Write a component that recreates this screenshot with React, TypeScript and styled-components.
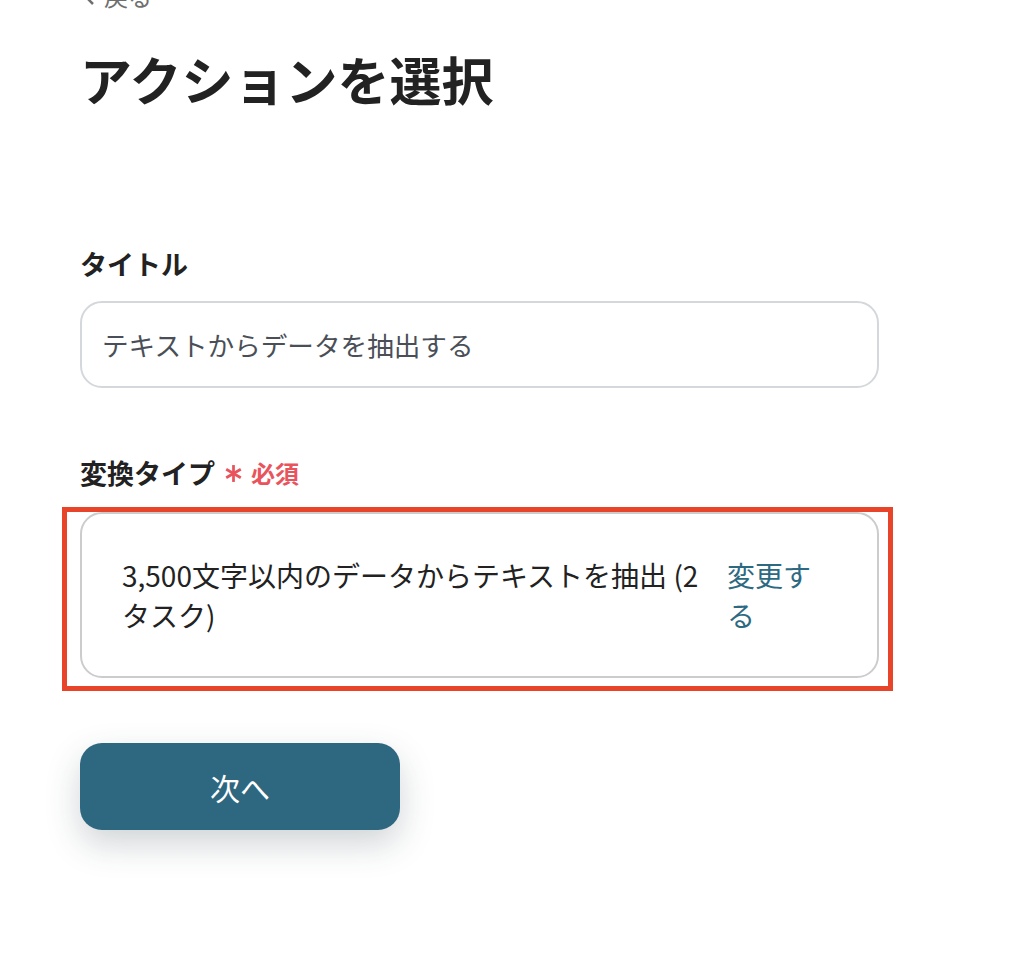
import React from "react";
import styled, { createGlobalStyle } from "styled-components";

const GlobalStyle = createGlobalStyle`
  html, body {
    margin: 0;
    padding: 0;
    background: #ffffff;
  }
  body {
    font-family: "Noto Sans CJK JP", "Noto Sans", sans-serif;
    color: #222222;
    overflow: hidden;
  }
  * { box-sizing: border-box; }
`;

const Page = styled.div`
  width: 1030px;
  height: 980px;
  padding-left: 80px;
  display: flex;
  flex-direction: column;
  align-items: flex-start;
`;

const BackLink = styled.a`
  display: flex;
  align-items: center;
  gap: 8px;
  margin-top: -19px;
  padding-left: 2px;
  height: 30px;
  line-height: 30px;
  font-size: 24px;
  color: #6f6f6f;
  text-decoration: none;
`;

const Heading = styled.h1`
  margin: 32px 0 0;
  font-size: 52px;
  line-height: 72px;
  font-weight: 700;
  color: #222222;
  letter-spacing: 0;
`;

const Field = styled.div<{ $top: number }>`
  display: flex;
  flex-direction: column;
  width: 800px;
  margin-top: ${(p) => p.$top}px;
`;

const Label = styled.div<{ $gap: number }>`
  display: flex;
  align-items: center;
  height: 40px;
  font-size: 27px;
  line-height: 40px;
  font-weight: 700;
  color: #222222;
  margin-bottom: ${(p) => p.$gap}px;
`;

const Required = styled.span`
  display: inline-flex;
  align-items: center;
  gap: 8px;
  margin-left: 9px;
  font-size: 24px;
  font-weight: 700;
  color: #e9545c;
`;

const TextInput = styled.div`
  width: 799px;
  height: 87px;
  border: 2px solid #d4d8dc;
  border-radius: 22px;
  padding: 0 20px;
  display: flex;
  align-items: center;
  font-size: 26.6px;
  color: #4a4f57;
`;

const CardWrap = styled.div`
  position: relative;
  width: 799px;
`;

const Card = styled.div`
  display: grid;
  grid-template-columns: 1fr 100px;
  column-gap: 2px;
  border: 2px solid #cccccc;
  border-radius: 22px;
  padding: 41px 50px 41px 40px;
  font-size: 28px;
  line-height: 40px;
  color: #222222;
`;

const ChangeLink = styled.a`
  color: #2d6a82;
  text-decoration: none;
`;

const Highlight = styled.div`
  position: absolute;
  top: -5px;
  left: -18px;
  right: -14px;
  bottom: -13px;
  border: 5px solid #e8442a;
  pointer-events: none;
`;

const NextButton = styled.button`
  margin-top: 65px;
  width: 320px;
  height: 87px;
  border: none;
  border-radius: 22px;
  background: #2e6780;
  color: #ffffff;
  font-family: inherit;
  font-size: 30px;
  box-shadow: 0 14px 34px rgba(40, 60, 70, 0.22);
`;

const Asterisk = () => (
  <svg width="19" height="19" viewBox="0 0 18 18" aria-hidden="true">
    <g stroke="#e9545c" strokeWidth="2.6" strokeLinecap="butt">
      <line x1="9" y1="1" x2="9" y2="17" />
      <line x1="2.1" y1="5" x2="15.9" y2="13" />
      <line x1="2.1" y1="13" x2="15.9" y2="5" />
    </g>
  </svg>
);

const Chevron = () => (
  <svg width="14" height="20" viewBox="0 0 14 20" aria-hidden="true">
    <path d="M11 2 L3 10 L11 18" fill="none" stroke="#6f6f6f" strokeWidth="2.5" />
  </svg>
);

export default function App() {
  return (
    <>
      <GlobalStyle />
      <Page>
        <BackLink href="#">
          <Chevron />
          戻る
        </BackLink>
        <Heading>アクションを選択</Heading>

        <Field $top={129}>
          <Label $gap={17}>タイトル</Label>
          <TextInput>テキストからデータを抽出する</TextInput>
        </Field>

        <Field $top={65}>
          <Label $gap={19}>
            変換タイプ
            <Required>
              <Asterisk />
              必須
            </Required>
          </Label>
          <CardWrap>
            <Card>
              <span>3,500文字以内のデータからテキストを抽出 (2タスク)</span>
              <ChangeLink href="#">変更する</ChangeLink>
            </Card>
            <Highlight />
          </CardWrap>
        </Field>

        <NextButton>次へ</NextButton>
      </Page>
    </>
  );
}
